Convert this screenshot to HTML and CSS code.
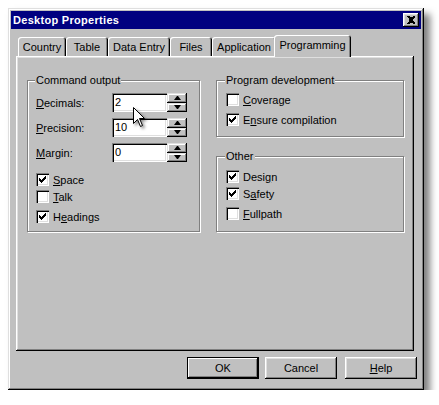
FILE: index.html
```html
<!DOCTYPE html>
<html>
<head>
<meta charset="utf-8">
<link rel="stylesheet" href="styles.css">
</head>
<body>
<div class="window">
  <div class="titlebar">
    <span class="title">Desktop Properties</span>
    <span class="close"><svg width="16" height="14" viewBox="0 0 16 14"><path d="M4 3h2l1 1h2l1-1h2v1l-2 2v2l2 2v1h-2l-1-1h-2l-1 1h-2v-1l2-2v-2l-2-2z" fill="#000" shape-rendering="crispEdges"/></svg></span>
  </div>
  <div class="tabs">
    <div class="tab t-country">Country</div>
    <div class="tab t-table">Table</div>
    <div class="tab t-data">Data Entry</div>
    <div class="tab t-files">Files</div>
    <div class="tab t-app">Application</div>
    <div class="tab active">Programming</div>
  </div>
  <div class="panel">
    <fieldset class="group g-cmd">
      <legend>Command output</legend>
      <div class="fields">
        <div class="field"><span class="lbl"><u>D</u>ecimals:</span><div class="input">2</div><div class="spin"><div class="sb"><i class="up"></i></div><div class="sb"><i class="down"></i></div></div></div>
        <div class="field"><span class="lbl"><u>P</u>recision:</span><div class="input">10</div><div class="spin"><div class="sb"><i class="up"></i></div><div class="sb"><i class="down"></i></div></div></div>
        <div class="field"><span class="lbl"><u>M</u>argin:</span><div class="input">0</div><div class="spin"><div class="sb"><i class="up"></i></div><div class="sb"><i class="down"></i></div></div></div>
      </div>
      <div class="checks c-cmd">
        <div class="check"><span class="box on"></span><span><u>S</u>pace</span></div>
        <div class="check"><span class="box"></span><span><u>T</u>alk</span></div>
        <div class="check gap"><span class="box on"></span><span>H<u>e</u>adings</span></div>
      </div>
    </fieldset>
    <div class="rightcol">
      <fieldset class="group g-dev">
        <legend>Program development</legend>
        <div class="checks">
          <div class="check"><span class="box"></span><span><u>C</u>overage</span></div>
          <div class="check gap"><span class="box on"></span><span>E<u>n</u>sure compilation</span></div>
        </div>
      </fieldset>
      <fieldset class="group g-other">
        <legend>Other</legend>
        <div class="checks">
          <div class="check"><span class="box on"></span><span>Desi<u>g</u>n</span></div>
          <div class="check"><span class="box on"></span><span>S<u>a</u>fety</span></div>
          <div class="check gap"><span class="box"></span><span><u>F</u>ullpath</span></div>
        </div>
      </fieldset>
    </div>
  </div>
  <div class="buttons">
    <div class="btn default">OK</div>
    <div class="btn">Cancel</div>
    <div class="btn help"><u>H</u>elp</div>
  </div>
  <svg class="cursor" width="14" height="21" viewBox="0 0 14 21"><path d="M0.5 0.5V16.5L4.5 12.5L7.5 19.5L9.5 18.5L6.5 11.5H11.5Z" fill="#fff" stroke="#000" stroke-width="1" stroke-linejoin="miter"/></svg>
</div>
</body>
</html>
```
FILE: styles.css
```css
* { box-sizing: border-box; }
html, body { margin: 0; background: #fff; }
body {
  font-family: "Liberation Sans", Arial, sans-serif;
  font-size: 11px;
  color: #000;
}
u { text-decoration: underline; text-underline-offset: 1px; }

.window {
  position: relative;
  margin: 8px 0 0 8px;
  width: 416px;
  height: 382px;
  padding: 3px;
  background: #c0c0c0;
  display: flex;
  flex-direction: column;
  box-shadow:
    inset -1px -1px #000,
    inset 1px 1px #dfdfdf,
    inset -2px -2px #808080,
    inset 2px 2px #fff,
    6px 6px 7px rgba(0, 0, 0, 0.5);
}

.titlebar {
  height: 18px;
  background: #000080;
  color: #fff;
  font-weight: bold;
  font-size: 11px;
  display: flex;
  align-items: center;
  justify-content: space-between;
  padding: 0 2px 0 2px;
}
.title { letter-spacing: 0.3px; }
.close {
  width: 16px;
  height: 14px;
  background: #c0c0c0;
  display: block;
  box-shadow:
    inset -1px -1px #000,
    inset 1px 1px #fff,
    inset -2px -2px #808080,
    inset 2px 2px #dfdfdf;
}
.close svg { display: block; }

.tabs {
  display: flex;
  align-items: flex-end;
  height: 21px;
  margin: 6px 0 0 7px;
}
.tab {
  height: 19px;
  display: flex;
  align-items: center;
  justify-content: center;
  background: #c0c0c0;
  color: #000;
  border-radius: 3px 3px 0 0;
  box-shadow:
    inset 1px 1px #fff,
    inset -1px 0 #000,
    inset -2px 0 #808080;
}
.t-country { width: 48px; }
.t-table { width: 42px; }
.t-data { width: 62px; }
.t-files { width: 42px; }
.t-app { width: 64px; }
.tab.active {
  position: relative;
  z-index: 1;
  width: 77px;
  height: 22px;
  margin: 0 -2px -1px -2px;
  padding-bottom: 2px;
}

.panel {
  height: 295px;
  margin: 0 7px 0 5px;
  padding: 18px 10px 0 11px;
  display: flex;
  align-items: flex-start;
  gap: 16px;
  box-shadow:
    inset -1px -1px #000,
    inset 1px 1px #fff,
    inset -2px -2px #808080,
    inset 2px 2px #dfdfdf;
}

.group {
  margin: 0;
  min-width: 0;
  border: 1px solid #808080;
  box-shadow: 1px 1px 0 #fff, inset 1px 1px 0 #fff;
  padding: 0 8px 0 8px;
}
.group legend {
  padding: 0 1px;
  margin-left: -1px;
  line-height: 13px;
  background: #c0c0c0;
}
.g-cmd { width: 173px; padding-top: 6px; padding-bottom: 6px; }
.rightcol { width: 188px; display: flex; flex-direction: column; gap: 13px; }
.g-dev { padding: 4px 9px 8px 9px; }
.g-other { padding: 5px 9px 9px 9px; }

.fields { display: flex; flex-direction: column; gap: 6px; }
.field { display: flex; align-items: center; height: 19px; }
.lbl { width: 76px; }
.input {
  width: 55px;
  height: 19px;
  background: #fff;
  color: #000;
  padding: 3px 3px 0 3px;
  line-height: 13px;
  box-shadow:
    inset 1px 1px #808080,
    inset 2px 2px #000,
    inset -1px -1px #fff,
    inset -2px -2px #dfdfdf;
}
.spin { width: 20px; height: 19px; display: flex; flex-direction: column; }
.sb {
  flex: 1;
  background: #c0c0c0;
  display: flex;
  align-items: center;
  justify-content: center;
  box-shadow:
    inset -1px -1px #000,
    inset 1px 1px #dfdfdf,
    inset -2px -2px #808080,
    inset 2px 2px #fff;
}
.sb i {
  display: block;
  width: 1px;
  height: 0;
  border-left: 3px solid transparent;
  border-right: 3px solid transparent;
  box-sizing: content-box;
}
.sb i.up { border-bottom: 4px solid #000; }
.sb i.down { border-top: 4px solid #000; }

.checks { display: flex; flex-direction: column; }
.c-cmd { margin-top: 9px; }
.check { display: flex; align-items: center; height: 17px; gap: 4px; }
.check.gap { margin-top: 3px; }
.box {
  width: 13px;
  height: 13px;
  flex: none;
  background: #fff;
  box-shadow:
    inset 1px 1px #808080,
    inset 2px 2px #000,
    inset -1px -1px #fff,
    inset -2px -2px #dfdfdf;
}
.box.on {
  background-color: #fff;
  background-image: url("data:image/svg+xml;utf8,<svg xmlns='http://www.w3.org/2000/svg' width='13' height='13' shape-rendering='crispEdges'><path d='M9 3h1v1h-1z M8 4h2v1h-2z M3 5h1v1h-1z M7 5h3v1h-3z M3 6h2v1h-2z M6 6h3v1h-3z M3 7h5v1h-5z M4 8h3v1h-3z M5 9h1v1h-1z' fill='black'/></svg>");
  background-repeat: no-repeat;
}

.buttons {
  display: flex;
  justify-content: flex-end;
  margin-top: 6px;
  padding-right: 4px;
}
.btn {
  width: 72px;
  height: 22px;
  display: flex;
  align-items: center;
  justify-content: center;
  background: #c0c0c0;
  box-shadow:
    inset -1px -1px #000,
    inset 1px 1px #fff,
    inset -2px -2px #808080,
    inset 2px 2px #dfdfdf;
}
.btn + .btn { margin-left: 6px; }
.btn.help { margin-left: 8px; }
.btn.default {
  box-shadow:
    inset 0 0 0 1px #000,
    inset -2px -2px #000,
    inset 2px 2px #fff,
    inset -3px -3px #808080;
}

.cursor {
  position: absolute;
  left: 125px;
  top: 99px;
  filter: drop-shadow(2px 2px 1.5px rgba(0, 0, 0, 0.45));
}
```
